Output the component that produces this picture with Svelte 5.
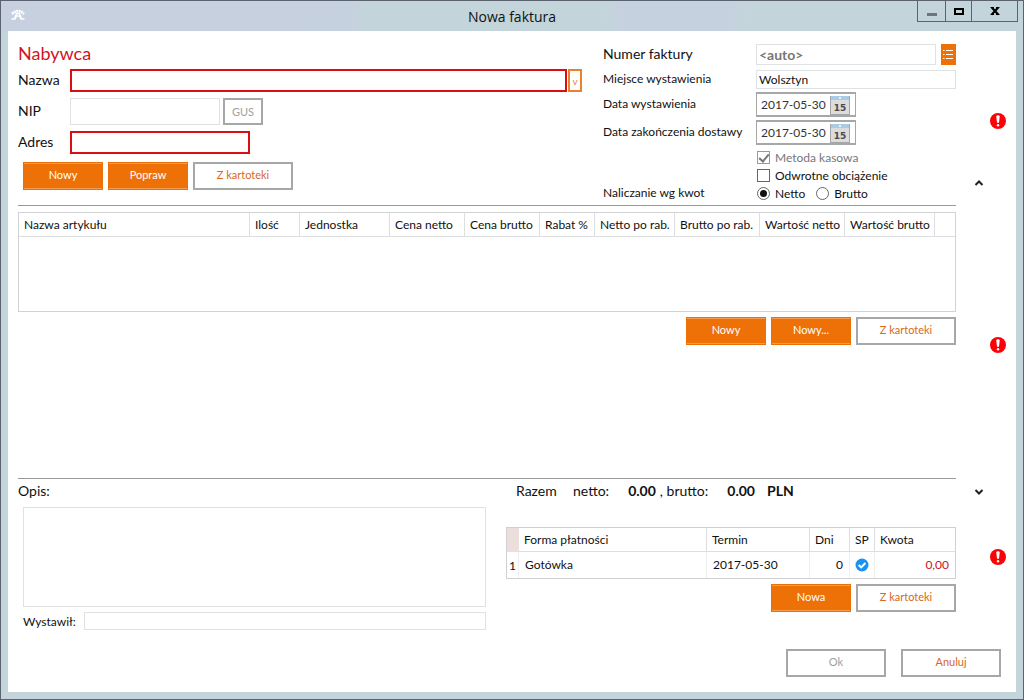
<script>
	let name = $state('');
	let nip = $state('');
	let address = $state('');
	let place = $state('Wolsztyn');
	let description = $state('');
	let issuedBy = $state('');
	let cashMethod = $state(true);
	let reverseCharge = $state(false);
	let countBy = $state('netto');

	let dates = $state([
		{ id: 'issued', label: 'Data wystawienia', value: '2017-05-30' },
		{ id: 'delivered', label: 'Data zakończenia dostawy', value: '2017-05-30' }
	]);

	// the first column takes whatever width is left
	const columns = [
		{ title: 'Nazwa artykułu' },
		{ title: 'Ilość', width: 50 },
		{ title: 'Jednostka', width: 90 },
		{ title: 'Cena netto', width: 75 },
		{ title: 'Cena brutto', width: 75 },
		{ title: 'Rabat %', width: 55 },
		{ title: 'Netto po rab.', width: 80 },
		{ title: 'Brutto po rab.', width: 85 },
		{ title: 'Wartość netto', width: 85 },
		{ title: 'Wartość brutto', width: 90 },
		{ title: '', width: 20 }
	];

	const payments = [{ form: 'Gotówka', term: '2017-05-30', days: 0, amount: '0,00' }];
</script>

{#snippet alertIcon()}
	<svg class="alert" width="16" height="16" viewBox="0 0 16 16" role="img" aria-label="Błąd">
		<circle cx="8" cy="8" r="8" fill="#fb0207" />
		<path d="M6.3 3.6 Q6.3 2.2 8 2.2 Q9.7 2.2 9.7 3.6 L9 9.8 H7 Z" fill="#fff" />
		<circle cx="8" cy="12.3" r="1.2" fill="#fff" />
	</svg>
{/snippet}

{#snippet calendarIcon()}
	<svg width="20" height="20" viewBox="0 0 20 20" aria-hidden="true">
		<rect x="0.5" y="1.5" width="19" height="18" fill="#dcdcdc" stroke="#a3a7aa" />
		<rect x="1" y="1" width="18" height="4" fill="#a9cbe6" />
		<rect x="9" y="2" width="2" height="2" rx="1" fill="#fff" />
		<text x="10" y="16" text-anchor="middle" font-family="DejaVu Sans, sans-serif" font-size="9" font-weight="bold" fill="#4a4a4a">15</text>
	</svg>
{/snippet}

<div class="window">
	<header>
		<svg class="logo" width="14" height="12" viewBox="0 0 14 12" aria-hidden="true">
			<path d="M1 5 Q7 -1 13 5" fill="none" stroke="#fff" stroke-width="2.6" stroke-dasharray="2 0.5" />
			<path d="M0.5 10 H4 L5.5 7 H8.5 L10 10 H13.5 M3.6 9 L5.6 4.5 H8.4 L10.4 9" fill="none" stroke="#fff" stroke-width="1.4" />
		</svg>
		<h1>Nowa faktura</h1>
		<div class="controls">
			<button aria-label="Minimalizuj">
				<svg width="10" height="12" viewBox="0 0 10 12"><path d="M0 9.5 H10" stroke="#6b7580" stroke-width="3" /></svg>
			</button>
			<button class="maximize" aria-label="Maksymalizuj">
				<svg width="10" height="12" viewBox="0 0 10 12"><rect x="1" y="4" width="8" height="5" fill="none" stroke="#000" stroke-width="2" /></svg>
			</button>
			<button class="close" aria-label="Zamknij">
				<svg width="10" height="12" viewBox="0 0 10 12"><path d="M1.8 2.5 L8.2 9.5 M8.2 2.5 L1.8 9.5" stroke="#000" stroke-width="2.2" /><path d="M0.5 2.5 H4 M6 2.5 H9.5 M0.5 9.5 H4 M6 9.5 H9.5" stroke="#000" /></svg>
			</button>
		</div>
	</header>

	<main>
		<section>
			<div class="body buyer-row">
				<div class="buyer">
					<h2>Nabywca</h2>
					<div class="row">
						<label for="name">Nazwa</label>
						<input id="name" class="required grow" bind:value={name} />
						<button class="drop" aria-label="Rozwiń listę">v</button>
					</div>
					<div class="row">
						<label for="nip">NIP</label>
						<input id="nip" class="nip" bind:value={nip} />
						<button class="btn gus" disabled>GUS</button>
					</div>
					<div class="row">
						<label for="address">Adres</label>
						<input id="address" class="required address" bind:value={address} />
					</div>
					<div class="buttons">
						<button class="btn primary">Nowy</button>
						<button class="btn primary">Popraw</button>
						<button class="btn">Z kartoteki</button>
					</div>
				</div>

				<div class="details">
					<div class="field number">
						<label for="number">Numer faktury</label>
						<input id="number" class="grow" value="<auto>" readonly />
						<button class="list" aria-label="Lista numerów">
							<svg width="11" height="11" viewBox="0 0 11 11"><path d="M0 1.5 H1.5 M3 1.5 H10 M0 5.5 H1.5 M3 5.5 H10 M0 9.5 H1.5 M3 9.5 H10" stroke="#fff" /></svg>
						</button>
					</div>
					<div class="field place">
						<label for="place">Miejsce wystawienia</label>
						<input id="place" class="grow" bind:value={place} />
					</div>
					{#each dates as date}
						<div class="field date">
							<label for={date.id}>{date.label}</label>
							<div class="date-box">
								<input id={date.id} bind:value={date.value} />
								<button aria-label="Wybierz datę">{@render calendarIcon()}</button>
							</div>
						</div>
					{/each}
					<div class="field option">
						<span class="gap"></span>
						<label class="muted"><input type="checkbox" bind:checked={cashMethod} disabled />Metoda kasowa</label>
					</div>
					<div class="field option">
						<span class="gap"></span>
						<label><input type="checkbox" bind:checked={reverseCharge} />Odwrotne obciążenie</label>
					</div>
					<div class="field option">
						<span class="gap">Naliczanie wg kwot</span>
						<label><input type="radio" value="netto" bind:group={countBy} />Netto</label>
						<label><input type="radio" value="brutto" bind:group={countBy} />Brutto</label>
					</div>
				</div>
			</div>
			<aside>
				{@render alertIcon()}
				<button class="chevron bottom" aria-label="Zwiń">
					<svg width="10" height="8" viewBox="0 0 10 8"><path d="M1.5 6 L5 2.5 L8.5 6" fill="none" stroke="#222" stroke-width="2" /></svg>
				</button>
			</aside>
		</section>

		<section class="stretch">
			<div class="body items">
				<div class="items-box">
					<table>
						<colgroup>
							{#each columns as column}
								<col style:width={column.width ? column.width + 'px' : 'auto'} />
							{/each}
						</colgroup>
						<thead>
							<tr>
								{#each columns as column}
									<th>{column.title}</th>
								{/each}
							</tr>
						</thead>
					</table>
				</div>
				<div class="buttons right">
					<button class="btn primary">Nowy</button>
					<button class="btn primary">Nowy...</button>
					<button class="btn">Z kartoteki</button>
				</div>
			</div>
			<aside>{@render alertIcon()}</aside>
		</section>

		<section>
			<div class="body summary">
				<div class="notes">
					<label class="caption" for="description">Opis:</label>
					<textarea id="description" bind:value={description}></textarea>
					<div class="issuer">
						<label for="issuer">Wystawił:</label>
						<input id="issuer" class="grow" bind:value={issuedBy} />
					</div>
				</div>

				<div class="payments">
					<p class="total">
						<span class="total-label">Razem</span>
						<span>netto:</span>
						<b>0.00</b>
						<span class="comma">, brutto:</span>
						<b>0.00</b>
						<b class="currency">PLN</b>
					</p>
					<table class="payment-table">
						<colgroup>
							<col class="c-no" />
							<col />
							<col class="c-term" />
							<col class="c-days" />
							<col class="c-sp" />
							<col class="c-amount" />
						</colgroup>
						<thead>
							<tr>
								<th class="corner"></th>
								<th>Forma płatności</th>
								<th>Termin</th>
								<th>Dni</th>
								<th>SP</th>
								<th>Kwota</th>
							</tr>
						</thead>
						<tbody>
							{#each payments as payment, i}
								<tr>
									<td class="no">{i + 1}</td>
									<td>{payment.form}</td>
									<td>{payment.term}</td>
									<td class="num">{payment.days}</td>
									<td class="sp">
										<svg width="14" height="14" viewBox="0 0 14 14" role="img" aria-label="Tak">
											<circle cx="7" cy="7" r="6.5" fill="#1a90f5" />
											<path d="M3.6 7 L6.2 9.4 L10.4 5" fill="none" stroke="#fff" stroke-width="2" />
										</svg>
									</td>
									<td class="num amount">{payment.amount}</td>
								</tr>
							{/each}
						</tbody>
					</table>
					<div class="buttons right">
						<button class="btn primary">Nowa</button>
						<button class="btn">Z kartoteki</button>
					</div>
				</div>
			</div>
			<aside>
				<button class="chevron top" aria-label="Rozwiń">
					<svg width="10" height="8" viewBox="0 0 10 8"><path d="M1.5 2 L5 5.5 L8.5 2" fill="none" stroke="#222" stroke-width="2" /></svg>
				</button>
				{@render alertIcon()}
			</aside>
		</section>

		<footer>
			<button class="btn" disabled>Ok</button>
			<button class="btn">Anuluj</button>
		</footer>
	</main>
</div>

<style>
	:global(body) {
		margin: 0;
	}

	* {
		box-sizing: border-box;
	}

	.window {
		display: flex;
		flex-direction: column;
		min-height: 100vh;
		padding: 0 7px 7px;
		border: 1px solid #5c6370;
		background: #c4d4db;
		color: #111;
		font-family: Lato, sans-serif;
		font-size: 12px;
	}

	header {
		position: relative;
		display: flex;
		align-items: center;
		justify-content: center;
		height: 30px;
		margin: 0 -7px;
		background: linear-gradient(90deg, #c6d0df 0, #c6d1df 34%, #c3d5da 36%, #c3d5da 59%, #c6d1df 61%, #c6d1df 71%, #c3d5da 73%);
	}

	h1 {
		margin: 0;
		font: 14px 'Open Sans', sans-serif;
	}

	.logo {
		position: absolute;
		left: 10px;
		top: 8px;
	}

	.controls {
		position: absolute;
		right: 5px;
		top: 0;
		display: flex;
		height: 21px;
		border: 1px solid #5c6370;
		border-top: 0;
	}

	.controls button {
		display: flex;
		align-items: center;
		justify-content: center;
		width: 28px;
		padding: 0;
		border: 0;
		border-right: 1px solid #5c6370;
		background: none;
	}

	.controls button.maximize {
		width: 26px;
	}

	.controls button.close {
		width: 45px;
		border-right: 0;
	}

	main {
		display: flex;
		flex-direction: column;
		flex: 1;
		background: #fff;
		box-shadow: 0 -1px #b3c0c7;
		padding-left: 10px;
	}

	section {
		display: flex;
	}

	.stretch {
		flex: 1;
	}

	.body {
		flex: 1;
		min-width: 0;
	}

	aside {
		position: relative;
		display: flex;
		align-items: center;
		width: 60px;
		padding: 5px 0 0 34px;
	}

	.chevron {
		position: absolute;
		left: 18px;
		display: flex;
		padding: 0;
		border: 0;
		background: none;
	}

	.chevron.bottom {
		bottom: 19px;
	}

	.chevron.top {
		top: 9px;
	}

	input,
	textarea {
		min-width: 0;
		margin: 0;
		padding: 0 2px 1px;
		border: 1px solid #dfe2e5;
		border-radius: 0;
		background: #fff;
		color: #111;
		font: 12px Lato, sans-serif;
		outline: 0;
	}

	.grow {
		flex: 1;
	}

	.buyer-row {
		display: flex;
		gap: 21px;
		border-bottom: 1px solid #999;
	}

	.buyer {
		display: flex;
		flex-direction: column;
		gap: 6px;
		flex: 1;
		padding-bottom: 15px;
	}

	h2 {
		margin: 6px 0 -6px;
		color: #d2141e;
		font-size: 18px;
		font-weight: 400;
		line-height: 32px;
	}

	.row {
		display: flex;
		align-items: center;
	}

	.row label {
		width: 52px;
		padding-bottom: 2px;
		font-size: 14px;
	}

	.row input {
		height: 23px;
	}

	.row .required {
		border: 2px solid #dc0d12;
	}

	.row .nip {
		width: 150px;
		height: 27px;
	}

	.row .address {
		width: 180px;
	}

	.drop {
		width: 14px;
		height: 23px;
		margin-left: 1px;
		padding: 0;
		border: 2px solid #e8822c;
		background: #fff;
		color: #dd8350;
		font: 10px Lato, sans-serif;
	}

	.buttons {
		display: flex;
		gap: 5px;
		padding: 2px 0 0 5px;
	}

	.buttons.right {
		justify-content: flex-end;
		padding: 5px 0 0;
	}

	.btn {
		width: 100px;
		height: 28px;
		padding: 0 0 3px;
		border: 2px solid #a6a8a8;
		background: #fff;
		color: #d9681c;
		font: 11px Lato, sans-serif;
	}

	.btn.primary {
		width: 80px;
		border: 1px solid #ec7008;
		background: #ee7108;
		box-shadow: inset 0 1px #f79a4b, inset 0 -1px #f79a4b;
		color: #fff;
	}

	.btn:disabled {
		color: #a0a0a0;
	}

	.btn.gus {
		width: 40px;
		height: 27px;
		margin-left: 3px;
		padding: 0;
	}

	.details {
		width: 353px;
		padding-top: 13px;
	}

	.field {
		display: flex;
		align-items: center;
	}

	.field > label:first-child,
	.gap {
		width: 153px;
		padding-bottom: 2px;
	}

	.number {
		margin-bottom: 5px;
	}

	.number label {
		font-size: 14px;
	}

	.number input {
		height: 21px;
		color: #777;
		font-size: 14px;
		font-weight: 700;
	}

	.list {
		display: flex;
		align-items: center;
		justify-content: center;
		width: 15px;
		height: 21px;
		margin-left: 5px;
		padding: 0;
		border: 0;
		background: #ee7108;
	}

	.place {
		margin-bottom: 3px;
	}

	.place input {
		height: 19px;
	}

	.date {
		margin-bottom: 3px;
	}

	.date-box {
		display: flex;
		align-items: center;
		width: 100px;
		height: 25px;
		border: 2px solid #a6a8a8;
		border-width: 2px 1px;
	}

	.date-box input {
		width: 73px;
		padding-left: 4px;
		border: 0;
		color: #333;
	}

	.date-box button {
		display: flex;
		padding: 0;
		border: 0;
		background: none;
	}

	.option {
		height: 18px;
	}

	.option label {
		display: flex;
		align-items: center;
		gap: 5px;
		margin-right: 10px;
	}

	.option .muted {
		color: #777;
	}

	.option input {
		appearance: none;
		display: grid;
		place-items: center;
		width: 13px;
		height: 13px;
		margin-left: 1px;
		padding: 0;
		border: 1px solid #666;
	}

	.option input:disabled {
		border-color: #999;
	}

	.option input[type='checkbox']:checked::before {
		content: '';
		width: 4px;
		height: 8px;
		border: solid #777;
		border-width: 0 2px 2px 0;
		transform: rotate(40deg);
	}

	.option input[type='radio'] {
		border-radius: 50%;
	}

	.option input[type='radio']:checked::before {
		content: '';
		width: 7px;
		height: 7px;
		border-radius: 50%;
		background: #111;
	}

	.items {
		padding-top: 6px;
		border-bottom: 1px solid #999;
	}

	.items-box {
		height: 100px;
		border: 1px solid #d0d2d4;
	}

	table {
		width: 100%;
		border-collapse: separate;
		border-spacing: 0;
		table-layout: fixed;
		font: 12px Lato, sans-serif;
	}

	th {
		height: 24px;
		padding: 0 0 0 5px;
		border-right: 1px solid #dcdee0;
		border-bottom: 1px solid #dcdee0;
		font-weight: 400;
		text-align: left;
		white-space: nowrap;
	}

	th:last-child {
		border-right: 0;
	}

	.summary {
		display: grid;
		grid-template-columns: 1fr 450px;
		gap: 20px;
	}

	.notes {
		display: flex;
		flex-direction: column;
	}

	.caption {
		height: 28px;
		font-size: 14px;
		line-height: 24px;
	}

	textarea {
		height: 100px;
		margin-left: 5px;
		resize: none;
	}

	.issuer {
		display: flex;
		align-items: center;
		margin: 5px 0 0 5px;
	}

	.issuer label {
		width: 61px;
	}

	.issuer input {
		height: 18px;
	}

	.total {
		display: flex;
		height: 48px;
		margin: 0;
		padding-left: 10px;
		font-size: 14px;
		line-height: 24px;
	}

	.total-label {
		width: 57px;
	}

	.total b {
		margin-left: 19px;
	}

	.total .comma {
		margin-left: 4px;
	}

	.total .currency {
		margin-left: 12px;
	}

	.payment-table {
		border: 1px solid #cfd0d4;
	}

	.c-no {
		width: 12px;
	}

	.c-term {
		width: 103px;
	}

	.c-days {
		width: 40px;
	}

	.c-sp {
		width: 25px;
	}

	.c-amount {
		width: 80px;
	}

	.payment-table .corner {
		border-color: #ecdedc;
		background: #ecdedc;
	}

	td {
		height: 26px;
		padding: 0 6px 2px;
		border-right: 1px solid #eceef0;
	}

	td:last-child {
		border-right: 0;
	}

	td.no,
	td.sp {
		padding: 0;
		text-align: center;
	}

	td.sp svg {
		display: block;
		margin: 0 auto;
	}

	.num {
		text-align: right;
	}

	.amount {
		color: #c8141e;
	}

	footer {
		display: flex;
		justify-content: flex-end;
		gap: 15px;
		padding: 19px 15px 15px 0;
	}
</style>
